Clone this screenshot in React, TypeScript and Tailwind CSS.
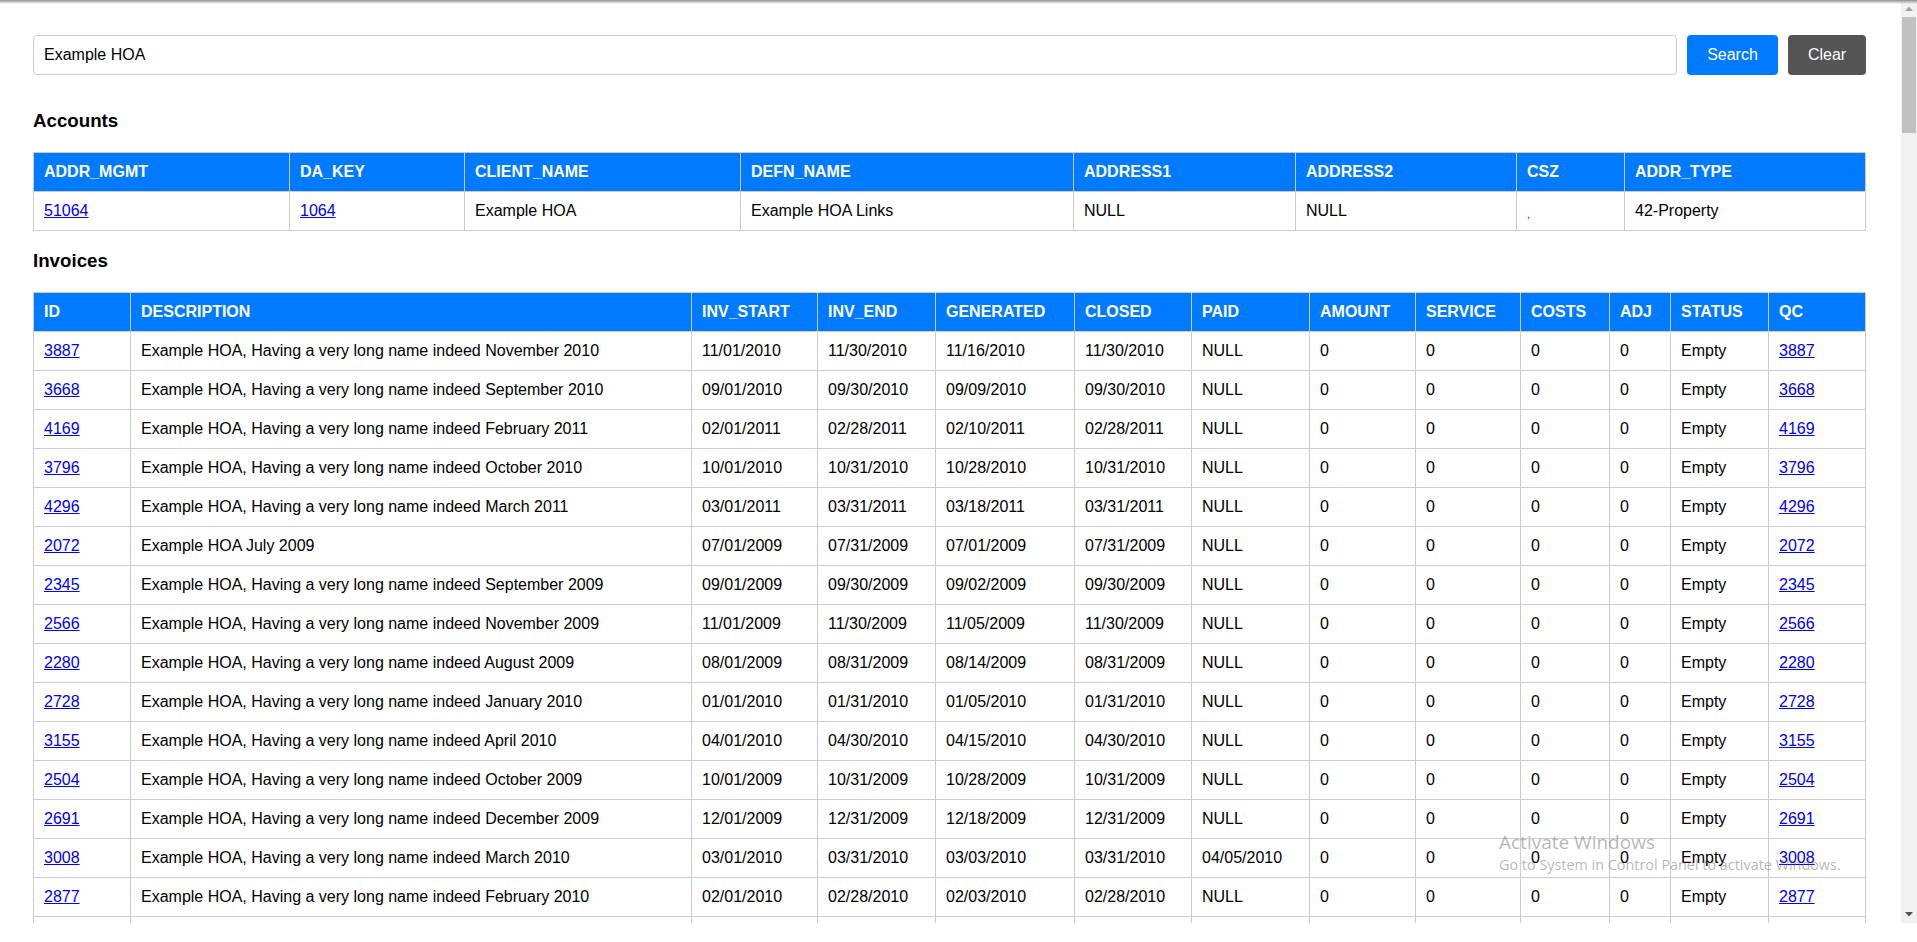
const accountCols = [256, 175, 276, 333, 222, 221, 108, 241]
const invoiceCols = [97, 561, 126, 118, 139, 117, 118, 106, 105, 89, 61, 98, 97]

const accountHeaders = ['ADDR_MGMT', 'DA_KEY', 'CLIENT_NAME', 'DEFN_NAME', 'ADDRESS1', 'ADDRESS2', 'CSZ', 'ADDR_TYPE']
const invoiceHeaders = ['ID', 'DESCRIPTION', 'INV_START', 'INV_END', 'GENERATED', 'CLOSED', 'PAID', 'AMOUNT', 'SERVICE', 'COSTS', 'ADJ', 'STATUS', 'QC']

const longName = 'Example HOA, Having a very long name indeed'

const invoices = [
  ['3887', `${longName} November 2010`, '11/01/2010', '11/30/2010', '11/16/2010', '11/30/2010', 'NULL'],
  ['3668', `${longName} September 2010`, '09/01/2010', '09/30/2010', '09/09/2010', '09/30/2010', 'NULL'],
  ['4169', `${longName} February 2011`, '02/01/2011', '02/28/2011', '02/10/2011', '02/28/2011', 'NULL'],
  ['3796', `${longName} October 2010`, '10/01/2010', '10/31/2010', '10/28/2010', '10/31/2010', 'NULL'],
  ['4296', `${longName} March 2011`, '03/01/2011', '03/31/2011', '03/18/2011', '03/31/2011', 'NULL'],
  ['2072', 'Example HOA July 2009', '07/01/2009', '07/31/2009', '07/01/2009', '07/31/2009', 'NULL'],
  ['2345', `${longName} September 2009`, '09/01/2009', '09/30/2009', '09/02/2009', '09/30/2009', 'NULL'],
  ['2566', `${longName} November 2009`, '11/01/2009', '11/30/2009', '11/05/2009', '11/30/2009', 'NULL'],
  ['2280', `${longName} August 2009`, '08/01/2009', '08/31/2009', '08/14/2009', '08/31/2009', 'NULL'],
  ['2728', `${longName} January 2010`, '01/01/2010', '01/31/2010', '01/05/2010', '01/31/2010', 'NULL'],
  ['3155', `${longName} April 2010`, '04/01/2010', '04/30/2010', '04/15/2010', '04/30/2010', 'NULL'],
  ['2504', `${longName} October 2009`, '10/01/2009', '10/31/2009', '10/28/2009', '10/31/2009', 'NULL'],
  ['2691', `${longName} December 2009`, '12/01/2009', '12/31/2009', '12/18/2009', '12/31/2009', 'NULL'],
  ['3008', `${longName} March 2010`, '03/01/2010', '03/31/2010', '03/03/2010', '03/31/2010', '04/05/2010'],
  ['2877', `${longName} February 2010`, '02/01/2010', '02/28/2010', '02/03/2010', '02/28/2010', 'NULL'],
]

function Th({ children }: { children: string }) {
  return <th className="border border-[#ccc] bg-[#007bff] p-[10px] text-left font-bold leading-[18px] text-white">{children}</th>
}

function Td({ children }: { children?: React.ReactNode }) {
  return <td className="h-[39px] border border-[#ccc] p-[10px] leading-[18px] text-black">{children}</td>
}

function NumLink({ value }: { value: string }) {
  return <a href="#" className="text-[#0000ee] underline">{value}</a>
}

function Cols({ widths }: { widths: number[] }) {
  return (
    <colgroup>
      {widths.map((w, i) => (
        <col key={i} style={{ width: w }} />
      ))}
    </colgroup>
  )
}

export default function App() {
  return (
    <div className="relative h-[942px] overflow-hidden bg-white font-['Liberation_Sans',Arial,sans-serif] text-base">
      <div className="flex h-[923px]">
        <main className="min-w-0 flex-1 overflow-hidden pl-[33px] pr-[35px] pt-[35px]">
          <div className="flex h-10 gap-[10px]">
            <input
              defaultValue="Example HOA"
              className="min-w-0 flex-1 rounded border border-[#ccc] px-[10px] text-base text-black outline-none"
            />
            <button className="w-[91px] rounded bg-[#007bff] text-white">Search</button>
            <button className="w-[78px] rounded bg-[#555] text-white">Clear</button>
          </div>

          <h3 className="mb-[20px] mt-[35px] text-[18.72px] font-bold leading-[22px] text-black">Accounts</h3>
          <table className="w-[1833px] table-fixed border-collapse">
            <Cols widths={accountCols} />
            <thead>
              <tr>
                {accountHeaders.map((h) => (
                  <Th key={h}>{h}</Th>
                ))}
              </tr>
            </thead>
            <tbody>
              <tr>
                <Td><NumLink value="51064" /></Td>
                <Td><NumLink value="1064" /></Td>
                <Td>Example HOA</Td>
                <Td>Example HOA Links</Td>
                <Td>NULL</Td>
                <Td>NULL</Td>
                <Td><span className="relative top-[7px] align-top text-[11px] leading-none text-[#a00]">,</span></Td>
                <Td>42-Property</Td>
              </tr>
            </tbody>
          </table>

          <h3 className="mb-[20px] mt-[19px] text-[18.72px] font-bold leading-[22px] text-black">Invoices</h3>
          <table className="w-[1833px] table-fixed border-collapse">
            <Cols widths={invoiceCols} />
            <thead>
              <tr>
                {invoiceHeaders.map((h) => (
                  <Th key={h}>{h}</Th>
                ))}
              </tr>
            </thead>
            <tbody>
              {invoices.map((row) => (
                <tr key={row[0]}>
                  <Td><NumLink value={row[0]} /></Td>
                  {row.slice(1).map((cell, i) => (
                    <Td key={i}>{cell}</Td>
                  ))}
                  <Td>0</Td>
                  <Td>0</Td>
                  <Td>0</Td>
                  <Td>0</Td>
                  <Td>Empty</Td>
                  <Td><NumLink value={row[0]} /></Td>
                </tr>
              ))}
              <tr>
                {invoiceCols.map((_, i) => (
                  <Td key={i} />
                ))}
              </tr>
            </tbody>
          </table>
        </main>

        {/* scrollbar */}
        <div className="flex w-4 shrink-0 flex-col items-center justify-between bg-[#f1f1f1]">
          <div className="flex w-full flex-col items-center">
            <svg width="16" height="17" viewBox="0 0 16 17"><path d="M8 6.5l4 4.5H4z" fill="#a3a3a3" /></svg>
            <div className="h-[116px] w-[14px] bg-[#c1c1c1]" />
          </div>
          <svg width="16" height="17" viewBox="0 0 16 17"><path d="M4 6h8l-4 4.5z" fill="#505050" /></svg>
        </div>
      </div>

      {/* top window shadow */}
      <div className="absolute inset-x-0 top-0 h-1 bg-gradient-to-b from-[#8f8f8f] to-white/0" />

      {/* windows watermark */}
      <div className="pointer-events-none absolute left-[1499px] top-[829px] font-['Open_Sans',sans-serif] text-[#707070]/50">
        <div className="text-[19px] leading-[26px]">Activate Windows</div>
        <div className="text-[14.4px] leading-[20px]">Go to System in Control Panel to activate Windows.</div>
      </div>
    </div>
  )
}
